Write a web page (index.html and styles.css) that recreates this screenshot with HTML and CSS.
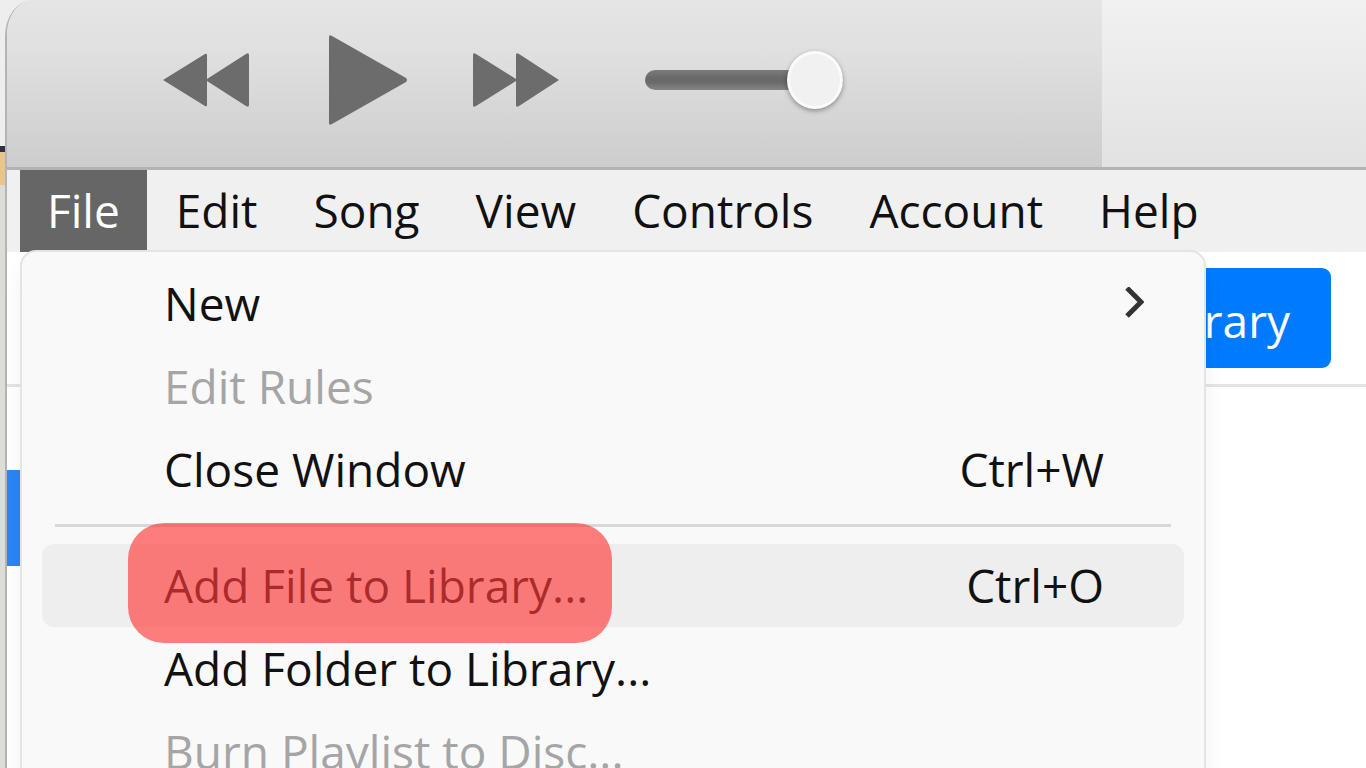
FILE: index.html
```html
<!DOCTYPE html>
<html lang="en">
<head>
<meta charset="utf-8">
<title>Music Player</title>
<link rel="stylesheet" href="styles.css">
</head>
<body>
<div class="desktop-sliver" aria-hidden="true"></div>
<div class="window">
  <header class="toolbar">
    <div class="transport">
      <button class="transport-button" type="button" aria-label="Previous">
        <svg width="86" height="54" viewBox="0 0 86 54"><path d="M0 27 42 1q2-1 2 1V26L83 1q3-2 3 1V52q0 3-3 1L44 28V52q0 2-2 1Z"/></svg>
      </button>
      <button class="transport-button" type="button" aria-label="Play">
        <svg width="92" height="90" viewBox="0 0 92 90"><path d="M14 2q0-3 3-1L91 43q2 2 0 4L17 89q-3 2-3-1Z"/></svg>
      </button>
      <button class="transport-button" type="button" aria-label="Next">
        <svg width="86" height="54" viewBox="0 0 86 54"><path d="M86 27 46 1q-3-2-3 1V26L3 1Q0-1 0 2V52q0 3 3 1L43 28V52q0 3 3 1Z"/></svg>
      </button>
      <input class="volume" type="range" min="0" max="100" value="100" aria-label="Volume">
    </div>
    <div class="now-playing"></div>
  </header>

  <nav class="menubar" aria-label="Main menu">
    <button class="menubar-item menubar-item--open" type="button" aria-expanded="true">File</button>
    <button class="menubar-item" type="button">Edit</button>
    <button class="menubar-item" type="button">Song</button>
    <button class="menubar-item" type="button">View</button>
    <button class="menubar-item" type="button">Controls</button>
    <button class="menubar-item" type="button">Account</button>
    <button class="menubar-item" type="button">Help</button>
  </nav>

  <main class="content">
    <div class="tabs"><button class="tab" type="button">Library</button></div>
    <div class="sidebar-selection"></div>

    <div class="dropdown" role="menu" aria-label="File">
      <button class="entry" type="button" role="menuitem">New
        <svg class="chevron" width="20" height="34" viewBox="0 0 20 34"><path d="M3 1 17 15 3 29"/></svg>
      </button>
      <button class="entry" type="button" role="menuitem" disabled>Edit Rules</button>
      <button class="entry" type="button" role="menuitem">Close Window<span>Ctrl+W</span></button>
      <hr class="divider">
      <button class="entry entry--hover" type="button" role="menuitem">Add File to Library...<span>Ctrl+O</span><i class="highlight"></i></button>
      <button class="entry" type="button" role="menuitem">Add Folder to Library...</button>
      <button class="entry" type="button" role="menuitem" disabled>Burn Playlist to Disc...</button>
    </div>
  </main>
</div>
</body>
</html>
```

FILE: styles.css
```css
* { box-sizing: border-box; }

body {
  margin: 0;
  height: 100vh;
  overflow: hidden;
  display: flex;
  background: #eee;
  font-family: "Open Sans", "Noto Sans", sans-serif;
  font-size: 46px;
  color: #111;
}

button {
  margin: 0;
  border: 0;
  background: none;
  font: inherit;
  color: inherit;
}

.desktop-sliver {
  flex: 0 0 5px;
  background: linear-gradient(#eee 0 146px, #2f3142 146px 152px, #e9c48d 152px 185px, #dcdcd8 185px);
}

.window {
  flex: 1;
  min-width: 0;
  display: flex;
  flex-direction: column;
  border-left: 2px solid #b4b4b4;
  border-top-left-radius: 28px 36px;
  background: #fff;
}

.toolbar {
  flex: none;
  display: flex;
  border-bottom: 3px solid #b3b3b3;
  border-top-left-radius: 26px 34px;
  background: linear-gradient(#e5e5e5, #e0e0e0 30%, #cdcdcd);
}

.transport {
  display: flex;
  align-items: center;
  gap: 66px;
  padding: 35px 259px 42px 156px;
}

.transport-button {
  padding: 0;
  display: flex;
  fill: #6c6c6c;
}

.volume {
  appearance: none;
  width: 198px;
  height: 58px;
  margin: 0 0 0 20px;
  background: none;
}

.volume::-webkit-slider-runnable-track {
  height: 20px;
  border-radius: 10px;
  background: linear-gradient(#7c7c7c, #696969 40%, #696969 60%, #858585);
}

.volume::-webkit-slider-thumb {
  appearance: none;
  width: 56px;
  height: 58px;
  margin-top: -19px;
  border: 3px solid #fbfbfb;
  border-radius: 50%;
  background: #f1f1f1;
  box-shadow: 0 2px 5px rgba(0, 0, 0, 0.35);
}

.now-playing {
  flex: 1;
  background: linear-gradient(#f1f1f1, #e2e2e2);
}

.menubar {
  flex: none;
  display: flex;
  gap: 2px;
  padding-left: 13px;
  background: #f0f0f0;
}

.menubar-item {
  padding: 0 27px 2px;
  line-height: 80px;
}

.menubar-item--open {
  background: #666;
  color: #fff;
}

.content {
  position: relative;
  flex: 1;
}

.tabs {
  display: flex;
  justify-content: flex-end;
  padding: 16px 35px 16px 0;
  border-bottom: 3px solid #e4e4e4;
}

.tab {
  padding: 4px 41px 0;
  border-radius: 9px;
  background: #007aff;
  color: #fff;
  line-height: 96px;
}

.sidebar-selection {
  width: 240px;
  height: 96px;
  margin-top: 83px;
  background: #2a85f8;
}

.dropdown {
  position: absolute;
  top: -2px;
  left: 13px;
  width: calc(100% - 173px);
  padding: 10px 20px;
  border: 2px solid #e4e4e4;
  border-radius: 16px;
  background: #f9f9f9;
  box-shadow: 0 16px 20px rgba(0, 0, 0, 0.06);
}

.entry {
  position: relative;
  display: flex;
  align-items: center;
  justify-content: space-between;
  width: 100%;
  padding: 0 80px 0 122px;
  border-radius: 12px;
  line-height: 83px;
  text-align: left;
}

.entry:disabled { color: #a5a5a5; }

.entry--hover { background: #eee; }

.chevron {
  margin-right: -40px;
  fill: none;
  stroke: #333;
  stroke-width: 5;
}

.divider {
  height: 3px;
  margin: 13px 13px 17px;
  border: 0;
  background: #d8d8d8;
}

.highlight {
  position: absolute;
  top: -21px;
  left: 86px;
  width: 484px;
  height: 120px;
  border-radius: 36px;
  background: rgba(255, 59, 59, 0.65);
  pointer-events: none;
}
```
